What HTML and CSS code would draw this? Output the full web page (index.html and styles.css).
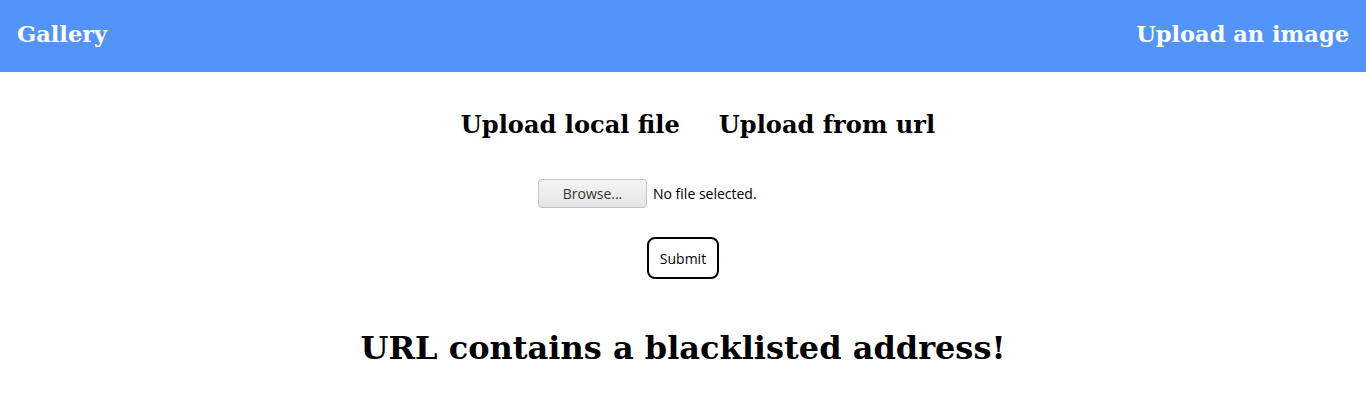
FILE: index.html
```html
<!DOCTYPE html>
<html>
<head>
<meta charset="utf-8">
<link rel="stylesheet" href="styles.css">
</head>
<body>
<header class="topbar">
  <a class="brand" href="#">Gallery</a>
  <a class="nav-link" href="#">Upload an image</a>
</header>
<main class="content">
  <div class="tabs">
    <h2 class="tab">Upload local file</h2>
    <h2 class="tab">Upload from url</h2>
  </div>
  <form class="upload-form">
    <div class="file-row">
      <span class="browse-btn">Browse...</span>
      <span class="file-status">No file selected.</span>
    </div>
    <button type="button" class="submit-btn">Submit</button>
  </form>
  <h1 class="message">URL contains a blacklisted address!</h1>
</main>
</body>
</html>
```
FILE: styles.css
```css
html, body {
  margin: 0;
  padding: 0;
  background: #ffffff;
}
body {
  font-family: "DejaVu Serif", serif;
  color: #000;
}
.topbar {
  height: 72px;
  box-sizing: border-box;
  background: #5294f9;
  display: flex;
  align-items: center;
  justify-content: space-between;
  padding: 0 17px 4px;
}
.brand, .nav-link {
  color: #ffffff;
  text-decoration: none;
  font-weight: bold;
  font-size: 22.5px;
}
.content {
  display: flex;
  flex-direction: column;
  align-items: center;
}
.tabs {
  display: flex;
  gap: 39px;
  margin-top: 38px;
  padding-left: 30px;
}
.tab {
  margin: 0;
  font-size: 24.1px;
  font-weight: bold;
  line-height: 30px;
}
.upload-form {
  display: flex;
  flex-direction: column;
  align-items: center;
  margin-top: 39px;
}
.file-row {
  display: flex;
  align-items: center;
  gap: 6px;
  width: 290px;
  font-family: "Open Sans", "DejaVu Sans", sans-serif;
  font-size: 14px;
}
.browse-btn {
  width: 107px;
  height: 27px;
  border: 1px solid #c4c4c4;
  border-radius: 4px;
  background: linear-gradient(#f4f4f4, #e6e6e6);
  display: flex;
  align-items: center;
  justify-content: center;
  color: #333;
}
.file-status {
  color: #000;
  flex: 1;
}
.submit-btn {
  margin-top: 29px;
  width: 72px;
  height: 42px;
  border: 2px solid #000;
  border-radius: 8px;
  background: #fff;
  font-family: "Open Sans", "DejaVu Sans", sans-serif;
  font-size: 14px;
  color: #000;
  padding: 0;
}
.message {
  margin: 50px 0 0;
  font-size: 32px;
  font-weight: bold;
}
```
